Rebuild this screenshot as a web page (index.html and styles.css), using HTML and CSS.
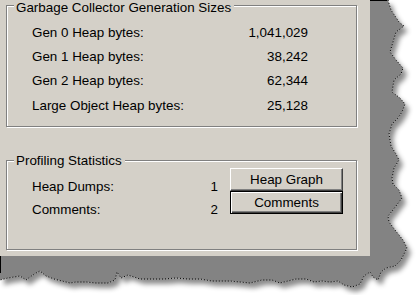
FILE: index.html
```html
<!DOCTYPE html>
<html lang="en">

<head>
  <meta charset="UTF-8" />
  <title>Profiler Statistics</title>
  <link rel="stylesheet" href="styles.css">
</head>

<body>

  <div class="shot">
    <!-- torn paper edge behind the dialog -->
    <svg class="torn" width="416" height="295" viewBox="0 0 416 295">
      <defs>
        <filter id="shadow" x="-10%" y="-10%" width="130%" height="130%">
          <feDropShadow dx="4" dy="5" stdDeviation="2.5" flood-color="#000" flood-opacity="0.45" />
        </filter>
      </defs>
      <polygon class="paper" filter="url(#shadow)"
        points="0,0 388,0 391,10 399,22 404,26 396,32 393,42 390,52 396,60 403,68 401,74 394,80 392,92 400,98 405,104 402,112 398,118 392,124 389,134 391,146 396,154 399,160 394,168 392,178 393,184 399,190 402,198 393,210 388,216 389,222 395,230 403,240 407,248 401,260 395,266 386,268 381,272 378,280 373,277 370,272 364,276 360,284 352,287 344,285 338,281 330,282 322,281 314,282 306,279 296,279 288,281 280,283 272,280 262,280 250,283 240,282 230,281 222,281 212,281 200,279 188,279 176,278 164,279 150,279 140,279 128,275 121,278 117,272 115,280 108,283 96,283 86,282 76,282 70,283 62,281 54,279 46,276 40,271 36,273 30,277 26,280 20,276 14,277 8,278 4,279 0,280" />
      <polyline class="edge"
        points="388,0 391,10 399,22 404,26 396,32 393,42 390,52 396,60 403,68 401,74 394,80 392,92 400,98 405,104 402,112 398,118 392,124 389,134 391,146 396,154 399,160 394,168 392,178 393,184 399,190 402,198 393,210 388,216 389,222 395,230 403,240 407,248 401,260 395,266 386,268 381,272 378,280 373,277 370,272 364,276 360,284 352,287 344,285 338,281 330,282 322,281 314,282 306,279 296,279 288,281 280,283 272,280 262,280 250,283 240,282 230,281 222,281 212,281 200,279 188,279 176,278 164,279 150,279 140,279 128,275 121,278 117,272 115,280 108,283 96,283 86,282 76,282 70,283 62,281 54,279 46,276 40,271 36,273 30,277 26,280 20,276 14,277 8,278 4,279 0,280" />
      <line class="frame" x1="370" y1="0.5" x2="387" y2="0.5" />
      <line class="frame" x1="0.5" y1="256" x2="0.5" y2="273" />
    </svg>

    <div class="dialog">
      <div class="group sizes">
        <div class="group-title">Garbage Collector Generation Sizes</div>
        <div class="stats">
          <span>Gen 0 Heap bytes:</span><span class="num">1,041,029</span>
          <span>Gen 1 Heap bytes:</span><span class="num">38,242</span>
          <span>Gen 2 Heap bytes:</span><span class="num">62,344</span>
          <span>Large Object Heap bytes:</span><span class="num">25,128</span>
        </div>
      </div>

      <div class="group profiling">
        <div class="group-title">Profiling Statistics</div>
        <div class="profile-body">
          <div class="counts">
            <span>Heap Dumps:</span><span class="num">1</span>
            <span>Comments:</span><span class="num">2</span>
          </div>
          <div class="buttons">
            <button class="win-button">Heap Graph</button>
            <button class="win-button default">Comments</button>
          </div>
        </div>
      </div>
    </div>
  </div>

</body>

</html>
```

FILE: styles.css
```css
* {
  box-sizing: border-box;
}

html,
body {
  margin: 0;
  padding: 0;
  background: #fff;
  font-family: 'Liberation Sans', Arial, sans-serif;
  font-size: 13.4px;
  color: #000;
}

.shot {
  position: relative;
  width: 416px;
  height: 295px;
  overflow: hidden;
}

.torn {
  position: absolute;
  top: 0;
  left: 0;
}

.paper {
  fill: #838383;
}

.edge {
  fill: none;
  stroke: #000;
  stroke-width: 1;
  stroke-dasharray: 1 2;
}

.frame {
  stroke: #000;
  stroke-width: 1;
}

.dialog {
  position: relative;
  width: 370px;
  height: 256px;
  background: #d4d0c8;
  padding: 5px 0 0 6px;
}

/* etched group box */
.group {
  width: 351px;
  border: 1px solid #808080;
  box-shadow: inset 1px 1px #fff, 1px 1px #fff;
}

.sizes {
  height: 122px;
}

.profiling {
  height: 90px;
  margin-top: 33px;
}

.group-title {
  display: table;
  margin: -6px 0 0 7px;
  padding: 0 3px 0 2px;
  line-height: 15px;
  background: #d4d0c8;
}

.profiling .group-title {
  margin-top: -8px;
}

.stats {
  display: grid;
  grid-template-columns: 1fr auto;
  grid-auto-rows: 24.3px;
  align-items: center;
  line-height: 15px;
  padding: 5px 48px 0 25px;
}

.num {
  text-align: right;
}

.profile-body {
  display: flex;
  align-items: flex-start;
  padding-left: 25px;
}

.counts {
  display: grid;
  grid-template-columns: 1fr auto;
  grid-auto-rows: 23px;
  align-items: center;
  width: 186px;
  line-height: 15px;
  padding-top: 7px;
}

.buttons {
  display: flex;
  flex-direction: column;
  margin-left: 12px;
}

.win-button {
  width: 113px;
  height: 23px;
  padding: 0;
  font: inherit;
  line-height: 15px;
  color: #000;
  background: #d4d0c8;
  border: 1px solid;
  border-color: #fff #404040 #404040 #fff;
  box-shadow: inset -1px -1px #808080;
}

.win-button.default {
  border-color: #000;
  box-shadow: inset 1px 1px #fff, inset -1px -1px #404040, inset -2px -2px #808080;
}
```
